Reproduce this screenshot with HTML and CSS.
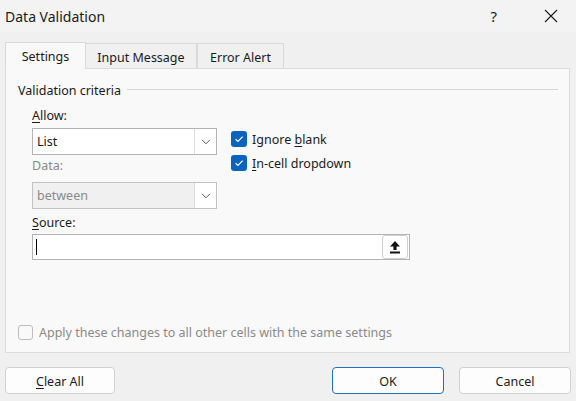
FILE: index.html
```html
<!DOCTYPE html>
<html>
<head>
<meta charset="utf-8">
<link rel="stylesheet" href="styles.css">
</head>
<body>
<div class="dialog">
  <div class="titlebar">
    <span class="title">Data Validation</span>
    <span class="help">?</span>
    <span class="close">
      <svg width="14" height="14" viewBox="0 0 14 14"><path d="M1 1 L13 13 M13 1 L1 13" stroke="#1b1b1b" stroke-width="1.1" fill="none"/></svg>
    </span>
  </div>
  <div class="tabs">
    <div class="tab active">Settings</div>
    <div class="tab tab-input">Input Message</div>
    <div class="tab tab-error">Error Alert</div>
  </div>
  <div class="panel">
    <div class="legend"><span class="legend-text">Validation criteria</span><span class="legend-line"></span></div>
    <div class="criteria">
      <div class="left-col">
        <div class="label label-allow"><u>A</u>llow:</div>
        <div class="combo">
          <span class="combo-text">List</span>
          <span class="combo-btn"><svg width="10" height="6" viewBox="0 0 10 6"><path d="M1 0.8 L5 4.8 L9 0.8" stroke="#5a5a5a" stroke-width="1" fill="none"/></svg></span>
        </div>
        <div class="label label-data disabled">Data:</div>
        <div class="combo combo-disabled">
          <span class="combo-text">between</span>
          <span class="combo-btn"><svg width="10" height="6" viewBox="0 0 10 6"><path d="M1 0.8 L5 4.8 L9 0.8" stroke="#5a5a5a" stroke-width="1" fill="none"/></svg></span>
        </div>
      </div>
      <div class="right-col">
        <div class="check-row">
          <span class="cb checked"><svg width="12" height="12" viewBox="0 0 12 12"><path d="M2.6 6.2 L5 8.4 L9.6 3.6" stroke="#ffffff" stroke-width="1.2" fill="none"/></svg></span>
          <span class="cb-label">Ignore <u>b</u>lank</span>
        </div>
        <div class="check-row">
          <span class="cb checked"><svg width="12" height="12" viewBox="0 0 12 12"><path d="M2.6 6.2 L5 8.4 L9.6 3.6" stroke="#ffffff" stroke-width="1.2" fill="none"/></svg></span>
          <span class="cb-label"><u>I</u>n-cell dropdown</span>
        </div>
      </div>
    </div>
    <div class="label label-source"><u>S</u>ource:</div>
    <div class="source-input">
      <span class="caret"></span>
      <span class="upload-btn"><svg width="12" height="14" viewBox="0 0 12 14"><path d="M6 1 L11 6.5 L7.6 6.5 L7.6 10 L4.4 10 L4.4 6.5 L1 6.5 Z" fill="#111"/><rect x="1" y="11.5" width="10" height="2" fill="#111"/></svg></span>
    </div>
    <div class="apply-row">
      <span class="cb cb-disabled"></span>
      <span class="apply-text">Apply these changes to all other cells with the same settings</span>
    </div>
  </div>
  <div class="buttons">
    <div class="btn btn-clear"><u>C</u>lear All</div>
    <div class="spacer"></div>
    <div class="btn btn-ok">OK</div>
    <div class="btn btn-cancel">Cancel</div>
  </div>
</div>
</body>
</html>
```
FILE: styles.css
```css
* { box-sizing: border-box; }
html, body {
  margin: 0;
  padding: 0;
  width: 576px;
  height: 401px;
  overflow: hidden;
  background: #f0f0f0;
  font-family: "Noto Sans", "Open Sans", sans-serif;
  font-size: 12.5px;
  color: #1a1a1a;
}
u { text-decoration: underline; text-underline-offset: 2px; }
.dialog { width: 576px; height: 401px; }

.titlebar {
  height: 32px;
  background: #f3f3f3;
  display: flex;
  align-items: center;
  padding-left: 5px;
}
.title { font-size: 14px; color: #1b1b1b; }
.help { margin-left: auto; font-size: 15px; color: #1b1b1b; margin-right: 47px; }
.close { width: 14px; height: 14px; display: flex; margin-right: 18px; }

.tabs {
  display: flex;
  align-items: flex-end;
  height: 36px;
  padding-left: 5px;
}
.tab {
  height: 25px;
  border: 1px solid #d9d9d9;
  border-bottom: none;
  display: flex;
  align-items: center;
  justify-content: center;
  background: #f0f0f0;
  padding-top: 3px;
}
.tab.active {
  width: 81px;
  height: 27px;
  margin-bottom: -1px;
  background: #f9f9f9;
  position: relative;
  z-index: 1;
  padding-top: 1px;
}
.tab-input { width: 111px; border-left: none; }
.tab-error { width: 87px; border-left: 1px solid #d9d9d9; }

.panel {
  margin-left: 5px;
  width: 565px;
  height: 285px;
  border: 1px solid #dcdcdc;
  background: #f9f9f9;
  padding-top: 12px;
}
.legend {
  display: flex;
  align-items: center;
  height: 18px;
  padding-left: 12px;
}
.legend-line {
  flex: 1;
  height: 1px;
  background: #d6d6d6;
  margin-left: 6px;
  margin-right: 11px;
  margin-top: -1px;
}
.criteria {
  display: flex;
  margin-left: 26px;
  margin-top: 8px;
}
.left-col { width: 185px; }
.label { height: 18px; line-height: 18px; }
.disabled { color: #8a8a8a; }
.label-allow { margin-bottom: 3px; }
.label-data { margin-top: 2px; margin-bottom: 7px; }
.combo {
  height: 27px;
  border: 1px solid #b4b4b4;
  background: #fff;
  display: flex;
  align-items: center;
}
.combo-text { flex: 1; padding-left: 4px; }
.combo-btn {
  width: 22px;
  height: 25px;
  border-left: 1px solid #dcdcdc;
  background: #fff;
  display: flex;
  align-items: center;
  justify-content: center;
}
.combo-disabled { background: #f0f0f0; border-color: #c2c2c2; }
.combo-disabled .combo-text { color: #8a8a8a; }

.right-col { margin-left: 14px; padding-top: 24px; }
.check-row {
  display: flex;
  align-items: center;
  height: 16px;
  margin-bottom: 8px;
}
.cb {
  width: 16px;
  height: 16px;
  border-radius: 3px;
  display: flex;
  align-items: center;
  justify-content: center;
  flex: none;
}
.cb.checked { background: #0b63c0; }
.cb-label { margin-left: 5px; }

.label-source { margin-left: 26px; margin-top: 5px; }
.source-input {
  margin-left: 26px;
  margin-top: 2px;
  width: 378px;
  height: 26px;
  border: 1px solid #b4b4b4;
  background: #fff;
  display: flex;
  align-items: center;
  padding-left: 3px;
}
.caret { width: 1px; height: 16px; background: #000; }
.upload-btn {
  margin-left: auto;
  margin-right: 1px;
  width: 26px;
  height: 24px;
  border: 1px solid #cfcfcf;
  border-radius: 3px;
  background: #fff;
  display: flex;
  align-items: center;
  justify-content: center;
}

.apply-row {
  display: flex;
  align-items: center;
  margin-left: 12px;
  margin-top: 64px;
}
.cb-disabled {
  width: 15px;
  height: 15px;
  border: 1px solid #bdbdbd;
  background: #f9f9f9;
}
.apply-text { margin-left: 6px; color: #8a8a8a; }

.buttons {
  display: flex;
  margin-top: 14px;
  padding: 0 5px;
  height: 27px;
}
.spacer { flex: 1; }
.btn {
  height: 27px;
  border: 1px solid #d0d0d0;
  border-radius: 4px;
  background: #fdfdfd;
  display: flex;
  align-items: center;
  justify-content: center;
  padding-top: 1px;
}
.btn-clear { width: 110px; }
.btn-ok { width: 112px; border-color: #1f6fc4; margin-right: 15px; }
.btn-cancel { width: 112px; }
```
